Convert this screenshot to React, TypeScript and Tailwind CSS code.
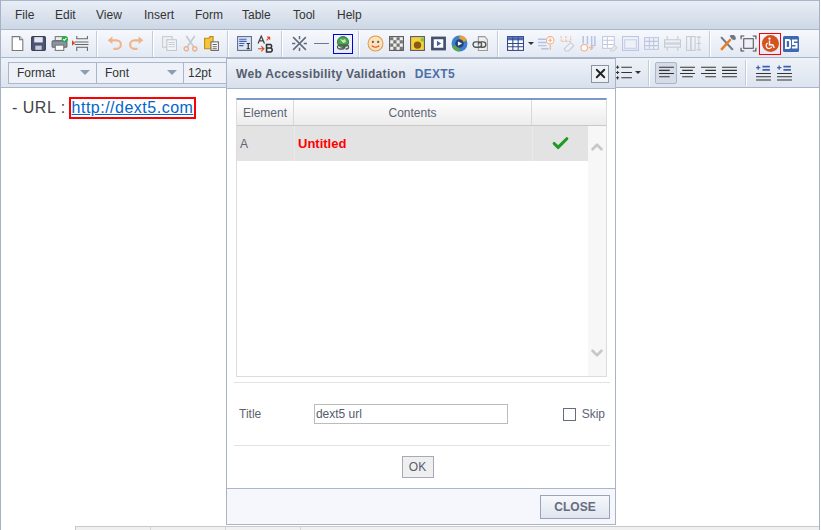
import type { ReactNode } from 'react';
import { Check, ChevronDown, ChevronUp, X } from 'lucide-react';

const menus = [
  { label: 'File', w: 'w-[40px]' },
  { label: 'Edit', w: 'w-[41px]' },
  { label: 'View', w: 'w-[48px]' },
  { label: 'Insert', w: 'w-[51px]' },
  { label: 'Form', w: 'w-[47px]' },
  { label: 'Table', w: 'w-[51px]' },
  { label: 'Tool', w: 'w-[44px]' },
  { label: 'Help', w: 'w-[40px]' },
];

function Ico({ children, className = '' }: { children: ReactNode; className?: string }) {
  return (
    <svg width="17" height="17" viewBox="0 0 16 16" fill="none" className={className}>
      {children}
    </svg>
  );
}

function Slot({ children, w = 'w-[21px]', className = '' }: { children?: ReactNode; w?: string; className?: string }) {
  return <div className={`${w} h-[20px] flex items-center justify-center shrink-0 ${className}`}>{children}</div>;
}

function Sep() {
  return <div className="w-[2px] h-[26px] mx-[5px] shrink-0 bg-white border-l border-[#c3ccdb]" />;
}

const NewDoc = () => (
  <Ico>
    <path d="M3 1.500h7l3 3v10H3z" fill="#fff" stroke="#777" />
    <path d="M10 1.500v3h3" fill="#ddd" stroke="#777" />
  </Ico>
);
const Save = () => (
  <Ico>
    <rect x="1.500" y="1.500" width="13" height="13" rx="1" fill="#4a5578" stroke="#3a3f55" />
    <rect x="4" y="2" width="8" height="5" fill="#e6e8ee" />
    <rect x="5" y="10" width="6" height="4" fill="#c8ccd6" />
  </Ico>
);
const Print = () => (
  <Ico>
    <rect x="4" y="1.500" width="8" height="4" fill="#eee" stroke="#777" />
    <rect x="1" y="5.500" width="14" height="6" rx="1" fill="#8a94a6" stroke="#666" />
    <rect x="4" y="9.500" width="8" height="5" fill="#fff" stroke="#777" />
    <circle cx="13" cy="4" r="3" fill="#2aa84a" />
    <path d="M11.500 4l1 1 2-2" stroke="#fff" />
  </Ico>
);
const Preview = () => (
  <Ico>
    <path d="M4.500 1v2.500h10V1M2.500 6.500h13M2.500 9h13M4.500 15v-3.500h10V15" stroke="#666" />
    <path d="M0 5l3 2.500L0 10z" fill="#d9481c" />
  </Ico>
);
const Undo = ({ flip = false }: { flip?: boolean }) => (
  <Ico className={flip ? '-scale-x-100' : ''}>
    <path d="M5 5h5a3.500 3.500 0 0 1 0 8H7" stroke="#f0b48c" strokeWidth="2" />
    <path d="M6 1.500v7L1.500 5z" fill="#f0b48c" />
  </Ico>
);
const Copy = () => (
  <Ico>
    <rect x="1.500" y="1.500" width="9" height="10" fill="#eef0f4" stroke="#c6cbd4" />
    <rect x="5.500" y="4.500" width="9" height="10" fill="#f6f7f9" stroke="#c0c5ce" />
    <path d="M7 7h6M7 9h6M7 11h6" stroke="#c6cbd4" />
  </Ico>
);
const Cut = () => (
  <Ico>
    <path d="M4 1l7 10M12 1L5 11" stroke="#c4c8cf" strokeWidth="1.500" />
    <circle cx="4" cy="13" r="2" stroke="#eeb08a" strokeWidth="1.300" />
    <circle cx="12" cy="13" r="2" stroke="#eeb08a" strokeWidth="1.300" />
  </Ico>
);
const Paste = () => (
  <Ico>
    <path d="M1.500 3h4l1-1.500h3V13h-8z" fill="#f4c53a" stroke="#c18a16" />
    <rect x="7.500" y="6.500" width="7" height="8" fill="#fff" stroke="#666" />
    <path d="M9 9h4M9 11h4M9 13h4" stroke="#666" />
  </Ico>
);
const Source = () => (
  <Ico>
    <rect x="1.500" y="1.500" width="13" height="13" fill="#dfe6f4" stroke="#5a6a8a" />
    <path d="M3 4h7M3 6h7M3 8h5M3 10h4" stroke="#3f62b0" />
    <path d="M10 8h3M11.500 8v5M10 13h3" stroke="#222" />
  </Ico>
);
const Spell = () => (
  <svg width="17" height="18" viewBox="0 0 16 17" fill="none">
    <path d="M1 8l3-7 3 7M2.200 5.500h3.600" stroke="#444" strokeWidth="1.200" />
    <path d="M9 9h4a2 2 0 0 1 0 3.200A2 2 0 0 1 13 16H9zM9 12.300h4" stroke="#333" strokeWidth="1.500" />
    <path d="M9 5l3-3M12 2v2.500M12 2H9.500" stroke="#d9481c" />
    <path d="M1 13h6M4 10.500L6.500 13 4 15.500" stroke="#d9481c" />
  </svg>
);
const Special = () => (
  <Ico>
    <path d="M2 2l12 12M14 2L2 14M8 1v3M8 12v3M1 8h3M12 8h3" stroke="#5f6878" strokeWidth="1.400" />
  </Ico>
);
const Hr = () => (
  <Ico>
    <path d="M1 8h14" stroke="#6f7888" />
  </Ico>
);
const LinkGlobe = () => (
  <svg width="16" height="16" viewBox="0 0 16 16" fill="none">
    <circle cx="8" cy="6" r="5.500" fill="#4aa84e" stroke="#2c7a3a" />
    <path d="M5 3l3 1 2-1 1 3-3 1z" fill="#cde8b8" />
    <path d="M2.500 11a2 2 0 0 1 2-2h3a2 2 0 0 1 0 4h-3a2 2 0 0 1-2-2zM8.500 11a2 2 0 0 1 2-2h1a2 2 0 0 1 0 4h-1" fill="none" stroke="#555" strokeWidth="1.300" />
  </svg>
);
const Smile = () => (
  <Ico>
    <circle cx="8" cy="8" r="7" fill="#fde3bc" stroke="#e09a4a" />
    <circle cx="5.500" cy="6.500" r="1" fill="#555" />
    <circle cx="10.500" cy="6.500" r="1" fill="#555" />
    <path d="M4.500 10c1.500 2 5.500 2 7 0" stroke="#d9481c" />
  </Ico>
);
const Checker = () => (
  <Ico>
    <rect x="1.500" y="1.500" width="13" height="13" fill="#eee" stroke="#555" />
    <path d="M2 2h3v3H2zM8 2h3v3H8zM5 5h3v3H5zM11 5h3v3h-3zM2 8h3v3H2zM8 8h3v3H8zM5 11h3v3H5zM11 11h3v3h-3z" fill="#777" />
  </Ico>
);
const Picture = () => (
  <Ico>
    <rect x="1.500" y="1.500" width="13" height="13" fill="#f4d33a" stroke="#556" />
    <circle cx="8" cy="9.500" r="3.500" fill="#8a5a14" />
    <path d="M11 3h3v3h-3z" fill="#7fc04a" />
  </Ico>
);
const Video = () => (
  <Ico>
    <rect x="1" y="1.500" width="14" height="13" fill="#44506e" />
    <rect x="3.500" y="4" width="9" height="8" fill="#fff" />
    <path d="M6.500 5.500l4 2.500-4 2.500z" fill="#3f62b0" />
  </Ico>
);
const Media = () => (
  <Ico>
    <circle cx="8" cy="8" r="7.500" fill="#3f7fd0" />
    <path d="M8 .5a7.500 7.500 0 0 1 7 4.500L8 8z" fill="#e8a23a" />
    <path d="M1 11a7.500 7.500 0 0 0 7 4.500L8 8z" fill="#5aa84e" />
    <circle cx="8" cy="8" r="4" fill="#23437a" />
    <path d="M6.500 6l4 2-4 2z" fill="#fff" />
  </Ico>
);
const FileLink = () => (
  <Ico>
    <path d="M6 1.500h6l2.500 3v10H6z" fill="#eee" stroke="#999" />
    <path d="M1 9a2.500 2.500 0 0 1 2.500-2.500h3a2.500 2.500 0 0 1 0 5h-3A2.500 2.500 0 0 1 1 9zM6 9a2.500 2.500 0 0 1 2.500-2.500h2a2.500 2.500 0 0 1 0 5h-2" stroke="#555" strokeWidth="1.300" />
  </Ico>
);
const TableIco = () => (
  <Ico>
    <rect x="0.500" y="1.500" width="15" height="13" fill="#fff" stroke="#33488a" />
    <path d="M1 2h14v3H1z" fill="#4c68b8" />
    <path d="M1 8h14M1 11h14M5.500 2v12M10.500 2v12" stroke="#33488a" />
  </Ico>
);
const Caret = () => <div className="w-0 h-0 border-x-[3px] border-t-[3px] border-x-transparent border-t-[#333]" />;
const RowAdd = () => (
  <Ico>
    <path d="M0 4h8M0 7h8M0 10h8M3 13h7" stroke="#b5c2e2" strokeWidth="1.400" />
    <circle cx="11.500" cy="5" r="3.500" fill="#fff" stroke="#eeb08a" />
    <path d="M11.500 3v4M9.500 5h4M11.500 9v5" stroke="#eeb08a" />
  </Ico>
);
const ColDel = () => (
  <Ico>
    <path d="M2 1v5h9V1M6.500 1v5" stroke="#e8c0a8" strokeDasharray="2 1" />
    <path d="M5 13l6-6 3 3-5 5H6z" fill="#eef0f4" stroke="#c6cbd4" />
  </Ico>
);
const ColAdd = () => (
  <Ico>
    <path d="M3 1v7M7 1v8M11 1v9h3V1" stroke="#b5c2e2" strokeWidth="1.400" />
    <circle cx="4" cy="12" r="3" fill="#fff" stroke="#eeb08a" />
    <path d="M8 12h4M10 10l2 2-2 2" stroke="#eeb08a" />
  </Ico>
);
const CellProp = () => (
  <Ico>
    <rect x="1.500" y="1.500" width="11" height="11" fill="#fff" stroke="#c0c8e0" />
    <path d="M2 5h10M2 9h10M6 2v10" stroke="#c0c8e0" />
    <path d="M9 14l4-4 2 2-3 3H9z" fill="#e8eaee" stroke="#cfd3da" />
  </Ico>
);
const CellBox = () => (
  <Ico>
    <rect x="0.500" y="1.500" width="15" height="13" stroke="#b9c4e2" />
    <rect x="2.500" y="4.500" width="11" height="8" fill="#eef1f8" stroke="#c6cfe6" />
  </Ico>
);
const CellGrid = () => (
  <Ico>
    <rect x="1.500" y="2.500" width="13" height="11" fill="#eef1f8" stroke="#bcc6e2" />
    <path d="M2 6h12M2 10h12M6 3v10M10 3v10" stroke="#bcc6e2" />
  </Ico>
);
const SplitRow = () => (
  <Ico>
    <path d="M3 1v3M13 1v3M3 12v3M13 12v3" stroke="#c6cad2" />
    <rect x="0.500" y="4.500" width="15" height="3" stroke="#c6cad2" />
    <rect x="0.500" y="8.500" width="15" height="3" stroke="#c6cad2" />
  </Ico>
);
const SplitCol = () => (
  <Ico>
    <rect x="1.500" y="1.500" width="4" height="13" stroke="#c6cad2" />
    <rect x="5.500" y="1.500" width="4" height="13" stroke="#c6cad2" />
    <path d="M11 2h4M13 2v12M11 14h4M11 8h4" stroke="#c6cad2" />
  </Ico>
);
const Tools = () => (
  <Ico>
    <path d="M2 2l11 12" stroke="#6f7888" strokeWidth="2" />
    <path d="M2 14l9-10" stroke="#e87f1e" strokeWidth="2.400" />
    <path d="M10 1a3 3 0 0 1 5 4l-3-1z" fill="#6f7888" />
  </Ico>
);
const FullScreen = () => (
  <Ico>
    <path d="M1 4V1h3M12 1h3v3M15 12v3h-3M4 15H1v-3" stroke="#444" />
    <rect x="3.500" y="3.500" width="9" height="9" fill="#eef1f8" stroke="#555" />
  </Ico>
);
const Wheelchair = () => (
  <svg width="17" height="17" viewBox="0 0 17 17" fill="none">
    <circle cx="8.500" cy="8.500" r="8.500" fill="#d6521f" />
    <circle cx="7.500" cy="3.600" r="1.200" fill="#fff" />
    <path d="M7.500 5.500v4.300h3.200l1.600 3" stroke="#fff" strokeWidth="1.400" />
    <path d="M5.700 8a2.900 2.900 0 1 0 4 3.700" stroke="#fff" strokeWidth="1.200" />
  </svg>
);
const D5 = () => (
  <svg width="16" height="16" viewBox="0 0 16 16">
    <rect width="16" height="16" rx="1.500" fill="#3d68b2" />
    <path d="M2 3h3.500a2.500 2.500 0 0 1 2.500 2.500v5A2.500 2.500 0 0 1 5.500 13H2zM3.800 5v6h1.500a.8.8 0 0 0 .8-.8V5.800a.8.8 0 0 0-.8-.8z" fill="#fff" fillRule="evenodd" />
    <path d="M9 3.500h5.500v2H11v1.500h3.500v5.500H9v-2h3.500V9H9z" fill="#fff" />
  </svg>
);

const ListIco = () => (
  <Ico>
    <path d="M5 3h10M5 8h10M5 13h10" stroke="#333" />
    <path d="M0 3h3M1.500 1.500v3M0 8h3M1.500 6.500v3M0 13h3M1.500 11.500v3" stroke="#333" />
  </Ico>
);
function Align({ lines }: { lines: string }) {
  return (
    <Ico>
      <path d={lines} stroke="#333" />
    </Ico>
  );
}
const Indent = () => (
  <Ico>
    <path d="M1 3.500h4M3 1.500v4" stroke="#3f62b0" strokeWidth="1.200" />
    <path d="M7 2.500h7M7 5.500h7" stroke="#3f62b0" strokeWidth="1.500" />
    <path d="M1 9h14M1 12h14M1 15h14" stroke="#333" />
  </Ico>
);

export default function App() {
  return (
    <div className="relative w-[820px] h-[530px] overflow-hidden bg-white border-x border-[#a7b2c6] font-['Liberation_Sans',Arial,sans-serif] text-[12px] text-[#333]">
      <div className="h-[526px] flex flex-col">
        {/* menu */}
        <div className="h-[30px] shrink-0 flex items-center pl-[14px] border-y border-[#aab6c9] bg-gradient-to-b from-[#e9eef6] to-[#cdd7e5]">
          {menus.map((m) => (
            <div key={m.label} className={`${m.w} text-[#333]`}>
              {m.label}
            </div>
          ))}
        </div>

        {/* toolbar */}
        <div className="h-[28px] shrink-0 flex items-center pl-[6px] border-b border-[#aab6c9] bg-gradient-to-b from-[#f6f8fc] to-[#e3e9f3]">
          <Slot><NewDoc /></Slot>
          <Slot><Save /></Slot>
          <Slot><Print /></Slot>
          <Slot><Preview /></Slot>
          <Sep />
          <Slot w="w-[22px]"><Undo /></Slot>
          <Slot w="w-[22px]"><Undo flip /></Slot>
          <Sep />
          <Slot><Copy /></Slot>
          <Slot><Cut /></Slot>
          <Slot><Paste /></Slot>
          <Sep />
          <Slot><Source /></Slot>
          <Slot><Spell /></Slot>
          <Sep />
          <Slot w="w-[22px]"><Special /></Slot>
          <Slot w="w-[22px]"><Hr /></Slot>
          <Slot w="w-[20px]" className="ml-[1px] border border-[#0000e0]"><LinkGlobe /></Slot>
          <Sep />
          <Slot><Smile /></Slot>
          <Slot><Checker /></Slot>
          <Slot><Picture /></Slot>
          <Slot><Video /></Slot>
          <Slot><Media /></Slot>
          <Slot><FileLink /></Slot>
          <div className="w-[1px] shrink-0" />
          <Sep />
          <Slot w="w-[22px]"><TableIco /></Slot>
          <Slot w="w-[10px]"><Caret /></Slot>
          <Slot><RowAdd /></Slot>
          <Slot><ColDel /></Slot>
          <Slot><ColAdd /></Slot>
          <Slot><CellProp /></Slot>
          <Slot><CellBox /></Slot>
          <Slot><CellGrid /></Slot>
          <Slot><SplitRow /></Slot>
          <Slot><SplitCol /></Slot>
          <Sep />
          <Slot className="ml-[1px]"><Tools /></Slot>
          <Slot><FullScreen /></Slot>
          <Slot w="w-[22px]" className="h-[22px] border border-[#ff0000]"><Wheelchair /></Slot>
          <Slot w="w-[20px]"><D5 /></Slot>
        </div>

        {/* format bar */}
        <div className="h-[30px] shrink-0 flex items-center pl-[7px] border-b border-[#aab6c9] bg-gradient-to-b from-[#eef2f8] to-[#dde4ef]">
          <div className="flex h-[22px] w-[219px] border border-[#aab6c9] bg-[#eef2f8] text-[#333]">
            <div className="w-[88px] flex items-center justify-between pl-[8px] pr-[6px] border-r border-[#aab6c9]">
              Format
              <div className="w-0 h-0 border-x-[5px] border-t-[5px] border-x-transparent border-t-[#8d9cb5]" />
            </div>
            <div className="w-[87px] flex items-center justify-between pl-[8px] pr-[6px] border-r border-[#aab6c9]">
              Font
              <div className="w-0 h-0 border-x-[5px] border-t-[5px] border-x-transparent border-t-[#8d9cb5]" />
            </div>
            <div className="flex-1 flex items-center pl-[4px]">12pt</div>
          </div>
          <div className="w-[388px] shrink-0" />
          <Slot w="w-[18px]"><ListIco /></Slot>
          <Slot w="w-[10px]"><Caret /></Slot>
          <Sep />
          <Slot w="w-[22px]" className="h-[22px] border border-[#aab6c9] rounded-[2px] bg-[#d5dce8]"><Align lines="M1 3h14M1 6h10M1 9h14M1 12h10" /></Slot>
          <Slot><Align lines="M1 3h14M3 6h10M1 9h14M3 12h10" /></Slot>
          <Slot><Align lines="M1 3h14M5 6h10M1 9h14M5 12h10" /></Slot>
          <Slot><Align lines="M1 3h14M1 6h14M1 9h14M1 12h14" /></Slot>
          <Sep />
          <Slot className="ml-[1px]"><Indent /></Slot>
          <Slot><Indent /></Slot>
        </div>

        {/* editor body */}
        <div className="flex-1 pl-[11px] pt-[9px] text-[16px] leading-[22px] text-[#444] tracking-[0.5px]">
          <span>- URL : </span>
          <a className="-ml-[2px] inline-block border-2 border-[#ff0000] pl-[1px] pr-[1px] h-[22px] leading-[17px] text-[#0066cc] underline">
            http://dext5.com
          </a>
        </div>
      </div>

      {/* bottom strip */}
      <div className="ml-[74px] h-[4px] flex border-t border-l border-[#c9c9c9] bg-[#f0f0f0]">
        <div className="w-[75px] border-r border-[#d4d4d4]" />
        <div className="w-[75px] border-r border-[#d4d4d4]" />
        <div className="w-[75px] border-r border-[#d4d4d4]" />
      </div>

      {/* dialog */}
      <div className="absolute left-[225px] top-[58px] w-[390px] h-[467px] flex flex-col border border-[#aab2c6] bg-white">
        <div className="h-[30px] shrink-0 flex items-center justify-between pl-[9px] pr-[6px] border-b border-[#aab6c9] bg-gradient-to-b from-[#eef2f9] to-[#d8e0ec]">
          <div className="font-bold text-[12px] text-[#555c6e] tracking-[0.3px]">
            Web Accessibility Validation
            <span className="ml-[9px] text-[#4f6fa8]">DEXT5</span>
          </div>
          <div className="w-[18px] h-[18px] border border-[#8c94a4] bg-[#eef1f6] flex items-center justify-center">
            <X size={15} strokeWidth={3} className="text-[#222]" />
          </div>
        </div>

        <div className="flex-1 pl-[9px] pr-[8px] pt-[9px]">
          <div className="h-[279px] border-x border-b border-[#dcdcdc] border-t-2 border-t-[#7b98c9] flex flex-col">
            <div className="h-[26px] shrink-0 flex border-b border-[#c8c8c8] bg-gradient-to-b from-white to-[#ececec] text-[#5c6474]">
              <div className="w-[57px] flex items-center justify-center border-r border-[#d8d8d8]">Element</div>
              <div className="w-[238px] flex items-center justify-center border-r border-[#d8d8d8]">Contents</div>
              <div className="flex-1" />
            </div>
            <div className="flex-1 flex">
              <div className="flex-1">
                <div className="h-[35px] flex bg-[#e3e3e3]">
                  <div className="w-[58px] flex items-center pl-[3px] text-[#5c6474] border-r border-[#e9e9e9]">A</div>
                  <div className="w-[238px] flex items-center pl-[3px] font-bold text-[#ff0000] text-[13px] border-r border-[#e9e9e9]">Untitled</div>
                  <div className="flex-1 flex items-center justify-center">
                    <Check size={19} strokeWidth={4} className="text-[#1f9a26]" />
                  </div>
                </div>
              </div>
              <div className="w-[18px] flex flex-col justify-between items-center bg-[#f7f7f7] pt-[12px] pb-[14px] text-[#c8c8c8]">
                <ChevronUp size={18} strokeWidth={3.5} />
                <ChevronDown size={18} strokeWidth={3.5} />
              </div>
            </div>
          </div>

          <div className="mt-[5px] border-t border-[#e3e3e3] -ml-[2px] -mr-[3px] h-[63px] flex items-center px-[5px] text-[#5c6474]">
            <div className="w-[75px]">Title</div>
            <div className="w-[194px] h-[20px] border border-[#bcbcbc] flex items-center pl-[1px] text-[#555c6e]">dext5 url</div>
            <div className="ml-[55px] w-[13px] h-[13px] border border-[#666c80] bg-white" />
            <div className="ml-[6px]">Skip</div>
          </div>

          <div className="border-t border-[#e3e3e3] -ml-[2px] -mr-[3px] pt-[10px] flex justify-center">
            <div className="-ml-[9px] w-[32px] h-[22px] border border-[#a4aab8] bg-[#efefef] flex items-center justify-center text-[#555c6e]">OK</div>
          </div>
        </div>

        <div className="h-[36px] shrink-0 flex items-center justify-end pr-[5px] border-t border-[#aab6c9] bg-[#f5f7fc]">
          <div className="w-[70px] h-[24px] border border-[#9aa4b8] bg-gradient-to-b from-[#f6f8fc] to-[#dfe5ef] flex items-center justify-center font-bold text-[#666c7c]">CLOSE</div>
        </div>
      </div>
    </div>
  );
}
